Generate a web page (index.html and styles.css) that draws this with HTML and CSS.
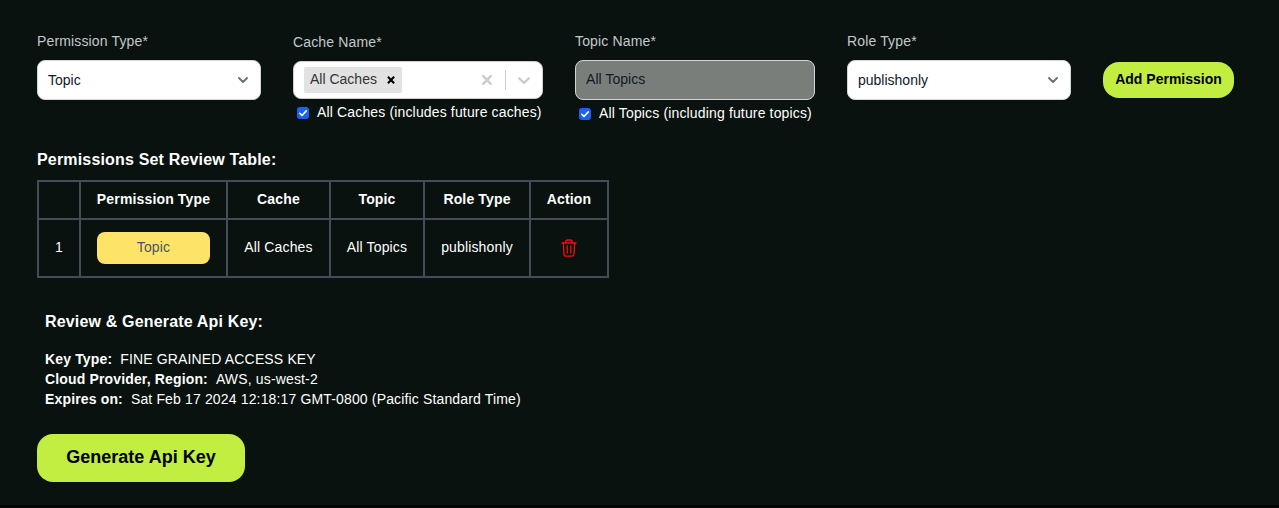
FILE: index.html
```html
<!DOCTYPE html>
<html lang="en">
<head>
<meta charset="utf-8">
<title>Generate Api Key</title>
<link rel="stylesheet" href="styles.css">
</head>
<body>
<main class="page">
  <form class="fields">
    <div class="field field-select">
      <span class="label">Permission Type*</span>
      <div class="control select">
        <span>Topic</span>
        <svg class="chevron" viewBox="0 0 20 20"><path d="M6 8l4 4 4-4"/></svg>
      </div>
    </div>
    <div class="field field-cache">
      <span class="label">Cache Name*</span>
      <div class="control multi">
        <span class="tag"><span class="tag-text">All Caches</span><svg class="tag-x" viewBox="0 0 14 14"><path d="M3.900 3.700l6.200 6.600M10.100 3.700L3.900 10.300"/></svg></span>
        <span class="indicators">
          <svg class="ind-x" viewBox="0 0 20 20"><path d="M6.300 6.100l7.400 7.800M13.700 6.100L6.300 13.900"/></svg>
          <i class="divider"></i>
          <svg class="ind" viewBox="0 0 20 20"><path d="M4.516 7.548c0.436-0.446 1.043-0.481 1.576 0l3.908 3.747 3.908-3.747c0.533-0.481 1.141-0.446 1.574 0 0.436 0.445 0.408 1.197 0 1.615-0.406 0.418-4.695 4.502-4.695 4.502-0.217 0.223-0.502 0.335-0.787 0.335s-0.57-0.112-0.789-0.335c0 0-4.287-4.084-4.695-4.502s-0.436-1.17 0-1.615z"/></svg>
        </span>
      </div>
      <div class="check"><svg class="box" viewBox="0 0 12 12"><rect width="12" height="12" rx="3"/><path d="M2.8 6.3l2.2 2.2 4.3-4.6"/></svg><span>All Caches (includes future caches)</span></div>
    </div>
    <div class="field field-topic">
      <span class="label">Topic Name*</span>
      <div class="control disabled"><span>All Topics</span></div>
      <div class="check"><svg class="box" viewBox="0 0 12 12"><rect width="12" height="12" rx="3"/><path d="M2.8 6.3l2.2 2.2 4.3-4.6"/></svg><span>All Topics (including future topics)</span></div>
    </div>
    <div class="field field-select">
      <span class="label">Role Type*</span>
      <div class="control select">
        <span>publishonly</span>
        <svg class="chevron" viewBox="0 0 20 20"><path d="M6 8l4 4 4-4"/></svg>
      </div>
    </div>
    <button type="button" class="btn add">Add Permission</button>
  </form>

  <h2 class="heading">Permissions Set Review Table:</h2>
  <table class="table">
    <colgroup><col class="c1"><col class="c2"><col class="c3"><col class="c4"><col class="c5"><col class="c6"></colgroup>
    <thead><tr><th></th><th>Permission Type</th><th>Cache</th><th>Topic</th><th>Role Type</th><th>Action</th></tr></thead>
    <tbody><tr>
      <td>1</td><td class="cell-pill"><span class="pill">Topic</span></td><td>All Caches</td><td>All Topics</td><td>publishonly</td>
      <td><svg class="trash" viewBox="0 0 16 18"><path d="M1 4H15M4.700 4V3Q4.700 1 6.700 1H9.300Q11.300 1 11.300 3V4M2.300 4L3 15.200Q3.200 17.200 5.200 17.200H10.800Q12.800 17.200 13 15.200L13.700 4M6.200 6.700V14M9.800 6.700V14"/></svg></td>
    </tr></tbody>
  </table>

  <section class="review">
    <h2 class="heading">Review &amp; Generate Api Key:</h2>
    <p class="line"><b>Key Type:</b><span>FINE GRAINED ACCESS KEY</span></p>
    <p class="line"><b>Cloud Provider, Region:</b><span>AWS, us-west-2</span></p>
    <p class="line"><b>Expires on:</b><span>Sat Feb 17 2024 12:18:17 GMT-0800 (Pacific Standard Time)</span></p>
  </section>
  <button type="button" class="btn generate">Generate Api Key</button>
</main>
</body>
</html>
```
FILE: styles.css
```css
* { box-sizing: border-box; }
body {
  margin: 0;
  background: #09120e;
  color: #fff;
  font: 14px/20px "Liberation Sans", Arial, sans-serif;
  letter-spacing: 0.15px;
}
.page { height: 508px; padding: 31px 37px 0; overflow: hidden; border-bottom: 3px solid #020403; }
.fields { display: flex; align-items: flex-start; gap: 32px; height: 119px; }
.field { display: flex; flex-direction: column; flex: none; }
.field-select { width: 224px; }
.field-cache { width: 250px; padding-top: 1px; }
.field-topic { width: 240px; }
.label { color: #c3c8cc; margin-bottom: 9px; white-space: nowrap; }
.control { height: 40px; display: flex; align-items: center; border: 1px solid #d1d5db; border-radius: 8px; background: #fff; color: #111827; }
.select { justify-content: space-between; padding: 0 7px 0 10px; letter-spacing: 0; }
.chevron { width: 20px; height: 20px; fill: none; stroke: #6b7280; stroke-width: 2; stroke-linecap: round; stroke-linejoin: round; }
.multi { height: 38px; border-color: #ccc; padding: 0 8px 0 10px; justify-content: space-between; }
.tag { display: flex; align-items: center; height: 26px; width: 98px; padding-left: 6px; background: #e2e2e2; border-radius: 2px; color: #333; letter-spacing: 0; }
.tag-text { width: 74px; padding-bottom: 2px; }
.tag-x, .ind-x { fill: none; stroke: #000; stroke-width: 2; }
.tag-x { width: 14px; height: 14px; }
.ind-x { width: 20px; height: 20px; stroke: #ccc; stroke-width: 2.4; stroke-linecap: round; }
.indicators { display: flex; align-items: center; }
.ind { width: 20px; height: 20px; fill: #ccc; }
.divider { width: 1px; height: 20px; margin: 0 8px; background: #ccc; }
.disabled { background: #7a7e7b; padding: 0 10px 2px; letter-spacing: 0.05px; }
.check { display: flex; align-items: center; gap: 8px; margin-top: 3px; padding-left: 4px; white-space: nowrap; }
.box { width: 12px; height: 12px; flex: none; margin-top: 1px; }
.box rect { fill: #1b62ee; }
.box path { fill: none; stroke: #fff; stroke-width: 1.6; stroke-linecap: round; stroke-linejoin: round; }
.btn { border: 0; background: #c1ee40; color: #000; font-family: inherit; font-weight: 700; padding: 0; white-space: nowrap; }
.add { width: 131px; height: 36px; margin-top: 31px; padding-bottom: 2px; border-radius: 16px; font-size: 14px; letter-spacing: 0; }
.heading { margin: 0; font-size: 16px; line-height: 20px; letter-spacing: 0.17px; }
.table { width: 572px; margin-top: 10px; border-collapse: collapse; table-layout: fixed; text-align: center; }
.table th, .table td { border: 2px solid #444c58; padding: 0 0 2px; white-space: nowrap; }
.table th { height: 38px; }
.table td { height: 58px; }
.table .cell-pill { padding: 0; }
.c1 { width: 42px; }
.c2 { width: 147px; }
.c3 { width: 103px; }
.c4 { width: 94px; }
.c5 { width: 106px; }
.c6 { width: 78px; }
.pill { display: block; height: 32px; line-height: 30px; margin: 0 16px; border-radius: 8px; background: #fde367; color: #4b5563; }
.trash { display: block; width: 16px; height: 18px; margin: 2px auto 0; fill: none; stroke: #ee1111; stroke-width: 1.3; stroke-linecap: round; stroke-linejoin: round; }
.review { padding: 34px 8px 0; }
.review .heading { margin-bottom: 17px; }
.line { display: flex; gap: 8px; margin: 0; }
.generate { width: 208px; height: 48px; margin-top: 25px; padding-bottom: 1px; border-radius: 16px; font-size: 18px; letter-spacing: 0; }
```
